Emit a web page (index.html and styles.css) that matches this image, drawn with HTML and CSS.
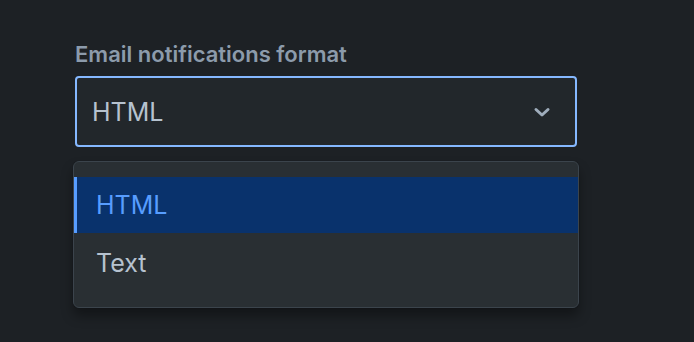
FILE: index.html
```html
<!DOCTYPE html>
<html>
<head>
<title>Email format</title>
<link rel="stylesheet" href="styles.css">
</head>
<body>
<div class="field">
	<label class="field-label">Email notifications format</label>
	<div class="select">
		<span class="select-value">HTML</span>
		<svg class="chevron" viewBox="0 0 18 11" width="18" height="11">
			<path d="M3 2.5 L9 8 L15 2.5" fill="none" stroke="currentColor" stroke-width="3" stroke-linecap="round" stroke-linejoin="round"/>
		</svg>
	</div>
	<ul class="menu">
		<li class="menu-item selected">HTML</li>
		<li class="menu-item">Text</li>
	</ul>
</div>
</body>
</html>
```

FILE: styles.css
```css
body {
	margin: 0;
	background-color: #1d2125;
	font-family: Inter, "Noto Sans", sans-serif;
	height: 100vh;
}

.field {
	width: 502px;
	padding: 40px 0 0 75px;
}

.field-label {
	display: block;
	color: #8c9bab;
	font-size: 22px;
	font-weight: 600;
	line-height: 28px;
	margin-bottom: 8px;
}

.select {
	box-sizing: border-box;
	height: 71px;
	border: 2px solid #85b8ff;
	border-radius: 4px;
	background-color: #22272b;
	display: flex;
	align-items: center;
	justify-content: space-between;
	padding: 0 24px 0 15px;
}

.select-value {
	color: #b6c2cf;
	font-size: 25px;
}

.chevron {
	color: #9fadbc;
	margin-top: 1px;
}

.menu {
	list-style: none;
	margin: 14px 0 0 -2px;
	padding: 15px 0 16px;
	width: 506px;
	box-sizing: border-box;
	background-color: #292f33;
	border: 1px solid #3b444c;
	border-radius: 6px;
	box-shadow: 0 8px 12px rgba(3, 4, 4, 0.36), 0 0 1px rgba(3, 4, 4, 0.5);
}

.menu-item {
	height: 56px;
	display: flex;
	align-items: center;
	padding-left: 19px;
	border-left: 3px solid transparent;
	color: #b6c2cf;
	font-size: 25px;
}

.menu-item + .menu-item {
	padding-top: 2px;
}

.menu-item.selected {
	background-color: #09326c;
	border-left-color: #579dff;
	color: #579dff;
}
```
